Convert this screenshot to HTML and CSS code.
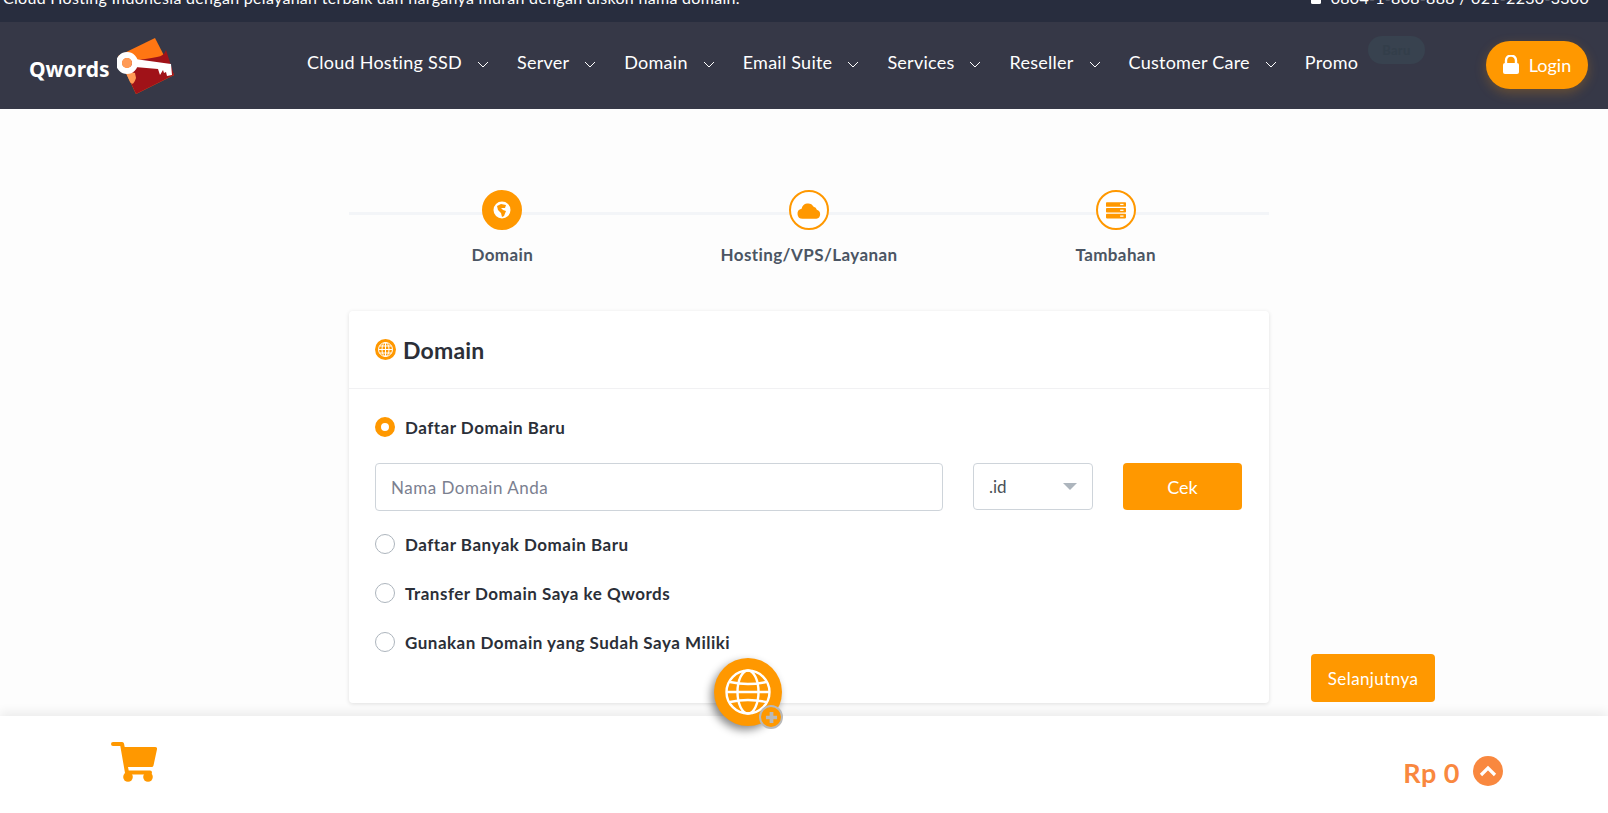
FILE: index.html
```html
<!DOCTYPE html>
<html lang="id">
<head>
<meta charset="utf-8">
<title>Qwords - Order</title>
<link rel="stylesheet" href="styles.css">
</head>
<body>
<div class="topbar">
  <span class="topbar-text">Cloud Hosting Indonesia dengan pelayanan terbaik dan harganya murah dengan diskon nama domain.</span>
  <span class="topbar-phone"><svg class="phone-icon" viewBox="0 0 12 12"><rect x="1" y="0" width="10" height="12" rx="1.5" fill="#fff"/></svg>0804-1-808-888 / 021-2230-3300</span>
</div>
<header class="nav">
  <a class="logo">
    <span class="logo-text">Qwords</span>
    <svg class="logo-mark" viewBox="0 0 58 58">
      <polygon points="38,1 1,19 19,57 57,38" fill="#ff7613"/>
      <path d="M13 24 Q30 22 40 20 Q47 19 49 13 L57 38 L19 57 L13 44Z" fill="#a01218"/>
      <path d="M8 34 L18 36 L19 41 Q16 50 13 45Z" fill="#ff9a55"/>
      <circle cx="10" cy="26" r="8" fill="none" stroke="#fff" stroke-width="6"/>
      <circle cx="10" cy="26" r="5" fill="#ff9a55"/>
      <path d="M18 22 L54 27 L55 38 L50 39 L49 35 L47 36 L46 33 L43 38 L41 32 L18 30Z" fill="#fff"/>
    </svg>
  </a>
  <nav class="menu">
    <a class="menu-item">Cloud Hosting SSD<svg class="chev" viewBox="0 0 12 7"><path d="M1 1l5 5 5-5"/></svg></a>
    <a class="menu-item">Server<svg class="chev" viewBox="0 0 12 7"><path d="M1 1l5 5 5-5"/></svg></a>
    <a class="menu-item">Domain<svg class="chev" viewBox="0 0 12 7"><path d="M1 1l5 5 5-5"/></svg></a>
    <a class="menu-item">Email Suite<svg class="chev" viewBox="0 0 12 7"><path d="M1 1l5 5 5-5"/></svg></a>
    <a class="menu-item">Services<svg class="chev" viewBox="0 0 12 7"><path d="M1 1l5 5 5-5"/></svg></a>
    <a class="menu-item">Reseller<svg class="chev" viewBox="0 0 12 7"><path d="M1 1l5 5 5-5"/></svg></a>
    <a class="menu-item">Customer Care<svg class="chev" viewBox="0 0 12 7"><path d="M1 1l5 5 5-5"/></svg></a>
    <a class="menu-item promo">Promo<span class="badge">Baru</span></a>
  </nav>
  <a class="login"><svg class="lock" viewBox="0 0 16 19"><path d="M3 8V5.5a5 5 0 0 1 10 0V8" fill="none" stroke="#fff" stroke-width="2.4"/><rect x="0" y="8" width="16" height="11" rx="2" fill="#fff"/></svg>Login</a>
</header>
<main class="main">
  <div class="center">
    <ol class="steps">
      <li class="step">
        <span class="step-dot active"><svg class="step-icon" viewBox="0 0 20 20"><circle cx="10" cy="10" r="8.5" fill="#fff"/><path d="M5 6l4-2 5 1-1 3-4 0 2 2 3 1-2 5-2 1-1-4-3-3z" fill="#ff9800"/></svg></span>
        <span class="step-label">Domain</span>
      </li>
      <li class="step">
        <span class="step-dot"><svg class="step-icon cloud" viewBox="0 0 26 18"><path d="M6 18a5.500 5.500 0 0 1-1-10.900 7 7 0 0 1 13-2.100 4.500 4.500 0 0 1 3.500 3.300 5 5 0 0 1-.5 9.700z" fill="#ff9800"/></svg></span>
        <span class="step-label">Hosting/VPS/Layanan</span>
      </li>
      <li class="step">
        <span class="step-dot"><svg class="step-icon server" viewBox="0 0 24 20"><g fill="#ff9800"><rect y="0" width="24" height="5.500" rx="1"/><rect y="7" width="24" height="5.500" rx="1"/><rect y="14" width="24" height="5.500" rx="1"/></g><g fill="#fff"><rect x="17" y="2" width="4" height="1.500"/><rect x="17" y="9" width="4" height="1.500"/><rect x="17" y="16" width="4" height="1.500"/></g></svg></span>
        <span class="step-label">Tambahan</span>
      </li>
    </ol>
    <section class="card">
      <div class="card-head">
        <svg class="head-icon" viewBox="0 0 21 21"><circle cx="10.500" cy="10.500" r="10.500" fill="#ff9800"/><g fill="none" stroke="#fff" stroke-width="1"><circle cx="10.500" cy="10.500" r="7"/><ellipse cx="10.500" cy="10.500" rx="3.500" ry="7"/><path d="M3.500 10.500h14M4.500 7h12M4.500 14h12M10.500 3.500v14"/></g></svg>
        <h2 class="card-title">Domain</h2>
      </div>
      <div class="card-body">
        <div class="radio-row"><span class="radio checked"></span><span class="radio-label">Daftar Domain Baru</span></div>
        <div class="domain-form">
          <input class="domain-input" type="text" placeholder="Nama Domain Anda">
          <div class="tld">.id<span class="tld-arrow"></span></div>
          <button class="btn btn-cek" type="button">Cek</button>
        </div>
        <div class="radio-row after-form"><span class="radio"></span><span class="radio-label">Daftar Banyak Domain Baru</span></div>
        <div class="radio-row next"><span class="radio"></span><span class="radio-label">Transfer Domain Saya ke Qwords</span></div>
        <div class="radio-row next"><span class="radio"></span><span class="radio-label">Gunakan Domain yang Sudah Saya Miliki</span></div>
      </div>
    </section>
  </div>
  <button class="btn btn-next" type="button">Selanjutnya</button>
</main>
<footer class="bottom">
  <svg class="cart" viewBox="0 0 46 40"><path d="M2 0h9a2 2 0 0 1 2 1.600L13.700 5H44a2 2 0 0 1 2 2.300L42.500 23.500a2 2 0 0 1-2 1.500H17l.7 3.500H39a2 2 0 0 1 0 4H16a2 2 0 0 1-2-1.600L9.300 4H2a2 2 0 0 1 0-4z" fill="#ff9800"/><circle cx="17" cy="35" r="4.800" fill="#ff9800"/><circle cx="37" cy="35" r="4.800" fill="#ff9800"/></svg>
  <div class="total">
    <span class="total-amount">Rp 0</span>
    <span class="total-toggle"><svg class="toggle-icon" viewBox="0 0 18 12"><path d="M2 10l7-7 7 7" fill="none" stroke="#fff" stroke-width="3.200"/></svg></span>
  </div>
</footer>
<div class="fab">
  <svg class="fab-globe" viewBox="0 0 46 46"><g fill="none" stroke="#fff" stroke-width="2.400"><circle cx="23" cy="23" r="21.500"/><ellipse cx="23" cy="23" rx="10.500" ry="21.500"/><path d="M2 23h42M5 13q18 4 36 0M5 33q18-4 36 0"/></g></svg>
  <span class="fab-plus"><svg class="plus-icon" viewBox="0 0 14 14"><path d="M7 1v12M1 7h12" stroke="#b9b9b9" stroke-width="4" fill="none"/></svg></span>
</div>
</body>
</html>
```
FILE: styles.css
```css
* { box-sizing: border-box; }
html, body { margin: 0; padding: 0; }
body {
  width: 1608px;
  height: 813px;
  overflow: hidden;
  display: flex;
  flex-direction: column;
  position: relative;
  background: #fdfdfd;
  font-family: "Lato", "Noto Sans", sans-serif;
  color: #2b2f38;
}
.topbar {
  height: 22px;
  flex: none;
  overflow: hidden;
  background: #282d3e;
  color: #fff;
  display: flex;
  justify-content: space-between;
  font-size: 16px;
  line-height: 20px;
  padding: 0 19px 0 3px;
  letter-spacing: 0.3px;
}
.topbar-text, .topbar-phone { margin-top: -12px; white-space: nowrap; display: block; }
.phone-icon { width: 12px; height: 14px; margin-right: 9px; vertical-align: -1px; }
.nav {
  height: 87px;
  flex: none;
  background: #363847;
  display: flex;
  align-items: flex-start;
  color: #fff;
}
.logo { display: flex; align-items: flex-start; margin-left: 29px; width: 278px; flex: none; }
.logo-text {
  font-family: "Noto Sans", sans-serif;
  font-weight: 700;
  font-size: 21px;
  line-height: 28px;
  margin-top: 33px;
  width: 88px;
  flex: none;
  transform-origin: left;
}
.logo-mark { width: 58px; height: 58px; margin-top: 15px; flex: none; }
.menu { display: flex; margin-top: 25px; flex: none; }
.menu-item {
  display: flex;
  align-items: center;
  font-size: 18px;
  line-height: 30px;
  margin-right: 28px;
  white-space: nowrap;
  letter-spacing: 0.25px;
  position: relative;
}
.chev { width: 12px; height: 7px; margin: 5px 0 0 15px; fill: none; stroke: #fff; stroke-width: 1; }
.promo { margin-right: 0; }
.badge {
  position: absolute;
  left: 63px;
  top: -11px;
  width: 57px;
  height: 28px;
  border-radius: 14px;
  background: #38424f;
  color: #333e4a;
  font-size: 13px;
  font-weight: 700;
  line-height: 28px;
  text-align: center;
}
.login {
  position: absolute;
  left: 1486px;
  top: 41px;
  width: 102px;
  height: 48px;
  border-radius: 24px;
  background: #ff9800;
  box-shadow: 0 4px 12px rgba(255,152,0,.25);
  display: flex;
  align-items: center;
  justify-content: center;
  font-size: 18px;
}
.lock { width: 16px; height: 19px; margin-right: 10px; margin-top: -2px; }
.main {
  flex: 1;
  display: flex;
  align-items: flex-end;
  padding-left: 349px;
  min-height: 0;
}
.center { width: 920px; flex: none; }
.steps {
  list-style: none;
  margin: 0 0 45px;
  padding: 0;
  display: grid;
  grid-template-columns: repeat(3, 1fr);
  background: linear-gradient(#f3f5f8, #f3f5f8) 0 22px / 100% 3px no-repeat;
}
.step { display: flex; flex-direction: column; align-items: center; }
.step-dot {
  width: 40px;
  height: 40px;
  border-radius: 50%;
  border: 2px solid #ff9800;
  background: #fff;
  display: flex;
  align-items: center;
  justify-content: center;
}
.step-dot.active { background: #ff9800; }
.step-icon { width: 20px; height: 20px; }
.step-icon.cloud { width: 24px; height: 17px; }
.step-icon.server { width: 20px; height: 17px; }
.step-label {
  margin-top: 14px;
  font-size: 17px;
  line-height: 22px;
  font-weight: 700;
  color: #4b5563;
  letter-spacing: 0.4px;
}
.card {
  background: #fff;
  border-radius: 4px;
  box-shadow: 0 1px 4px rgba(0,0,0,.12);
  margin-bottom: 13px;
}
.card-head {
  height: 78px;
  border-bottom: 1px solid #f1f1f3;
  display: flex;
  align-items: center;
  padding-left: 26px;
}
.head-icon { width: 21px; height: 21px; margin-right: 7px; }
.card-title { margin: 0; font-size: 23px; font-weight: 700; color: #2b2f38; line-height: 30px; letter-spacing: 0.2px; }
.card-body { padding: 28px 26px 51px; }
.radio-row { display: flex; align-items: center; height: 20px; }
.after-form { margin-top: 23px; }
.next { margin-top: 29px; }
.radio {
  width: 20px;
  height: 20px;
  border-radius: 50%;
  border: 1px solid #adb5bd;
  background: #fff;
  flex: none;
}
.radio.checked { border: 6px solid #ff9800; }
.radio-label { margin-left: 10px; font-size: 17px; font-weight: 700; color: #2b2f38; letter-spacing: 0.5px; }
.domain-form { display: flex; margin-top: 26px; align-items: flex-start; }
.domain-input {
  width: 568px;
  height: 48px;
  border: 1px solid #ced4da;
  border-radius: 4px;
  padding: 0 15px;
  font-family: inherit;
  font-size: 17px;
  letter-spacing: 0.5px;
  outline: none;
  background: #fff;
}
.domain-input::placeholder { color: #7b8090; opacity: 1; }
.tld {
  width: 120px;
  height: 47px;
  margin-left: 30px;
  border: 1px solid #ced4da;
  border-radius: 4px;
  padding: 0 15px;
  font-size: 17px;
  line-height: 45px;
  color: #495057;
  display: flex;
  justify-content: space-between;
  align-items: center;
}
.tld-arrow {
  width: 0;
  height: 0;
  border-left: 7px solid transparent;
  border-right: 7px solid transparent;
  border-top: 7px solid #adb5bd;
}
.btn {
  border: 0;
  border-radius: 4px;
  background: #ff9800;
  color: #fff;
  font-family: inherit;
  font-size: 18px;
  padding: 0;
}
.btn-cek { width: 119px; height: 47px; margin-left: 30px; }
.btn-next { width: 124px; height: 48px; margin: 0 0 14px 42px; font-size: 17px; letter-spacing: 0.4px; flex: none; }
.bottom {
  height: 97px;
  flex: none;
  background: #fff;
  box-shadow: 0 -4px 10px rgba(0,0,0,.07);
  display: flex;
  align-items: flex-start;
  justify-content: space-between;
  padding: 26px 105px 0 111px;
  position: relative;
}
.cart { width: 46px; height: 40px; }
.total { display: flex; align-items: flex-start; margin-top: 14px; }
.total-amount { font-size: 27px; line-height: 34px; font-weight: 700; color: #f9883f; margin-right: 13px; margin-top: 0; letter-spacing: 0.5px; }
.total-toggle {
  width: 30px;
  height: 30px;
  border-radius: 50%;
  background: #f9883f;
  display: flex;
  align-items: center;
  justify-content: center;
}
.toggle-icon { width: 18px; height: 12px; }
.fab {
  position: absolute;
  left: 714px;
  top: 658px;
  width: 68px;
  height: 68px;
  border-radius: 50%;
  background: #ff9800;
  box-shadow: -3px 4px 8px rgba(0,0,0,.45);
  display: flex;
  align-items: center;
  justify-content: center;
}
.fab-globe { width: 46px; height: 46px; }
.fab-plus {
  position: absolute;
  left: 45px;
  top: 47px;
  width: 24px;
  height: 24px;
  border-radius: 50%;
  background: #ff9800;
  border: 2px solid #b9b9b9;
  display: flex;
  align-items: center;
  justify-content: center;
}
.plus-icon { width: 13px; height: 13px; }
```
